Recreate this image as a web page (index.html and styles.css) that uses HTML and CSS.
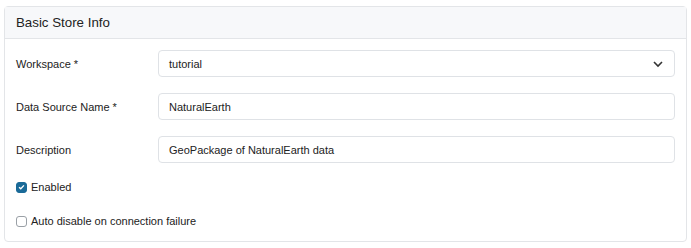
FILE: index.html
```html
<!DOCTYPE html>
<html lang="en">
<head>
    <meta charset="utf-8"/>
    <title>Basic Store Info</title>
    <link rel="stylesheet" href="styles.css">
</head>
<body>
    <div class="card">
        <div class="card-header">Basic Store Info</div>
        <div class="card-body">
            <div class="row">
                <label class="label">Workspace *</label>
                <div class="control select">
                    <span>tutorial</span>
                    <svg width="12" height="8" viewBox="0 0 12 8"><path d="M2 2 L6 6 L10 2" fill="none" stroke="#333" stroke-width="1.6"/></svg>
                </div>
            </div>
            <div class="row">
                <label class="label">Data Source Name *</label>
                <div class="control">NaturalEarth</div>
            </div>
            <div class="row">
                <label class="label">Description</label>
                <div class="control">GeoPackage of NaturalEarth data</div>
            </div>
            <div class="check">
                <span class="box checked"><svg width="10" height="10" viewBox="0 0 10 10"><path d="M2.3 5.2 L4.2 7 L7.7 3.2" fill="none" stroke="#fff" stroke-width="1.5"/></svg></span>
                <span>Enabled</span>
            </div>
            <div class="check">
                <span class="box"></span>
                <span>Auto disable on connection failure</span>
            </div>
        </div>
    </div>
</body>
</html>
```

FILE: styles.css
```css
* {
    box-sizing: border-box;
}
body {
    margin: 0;
    padding: 6px 4px 5px 4px;
    font-family: "Liberation Sans", Arial, sans-serif;
    font-size: 11px;
    color: #222;
    background: #fff;
}
.card {
    border: 1px solid #e3e5e8;
    border-radius: 4px;
    width: 683px;
}
.card-header {
    background: #f7f8fa;
    border-bottom: 1px solid #e3e5e8;
    height: 32px;
    padding: 0 11px;
    display: flex;
    align-items: center;
    font-size: 13.3px;
    color: #222;
}
.card-body {
    padding: 11px 11px 12px 11px;
}
.row {
    display: flex;
    align-items: center;
    margin-bottom: 16px;
}
.label {
    width: 142px;
    flex: none;
}
.control {
    flex: 1;
    height: 27px;
    border: 1px solid #dfe2e6;
    border-radius: 4px;
    padding: 0 10px;
    display: flex;
    align-items: center;
}
.select {
    justify-content: space-between;
}
.check {
    display: flex;
    align-items: center;
    gap: 4px;
    height: 16px;
    margin-top: 18px;
}
.row + .check {
    margin-top: 2px;
}
.box {
    width: 11px;
    height: 11px;
    border: 1px solid #9aa0a6;
    border-radius: 3px;
    display: flex;
    align-items: center;
    justify-content: center;
}
.box.checked {
    background: #1a6a98;
    border-color: #1a6a98;
}
```
